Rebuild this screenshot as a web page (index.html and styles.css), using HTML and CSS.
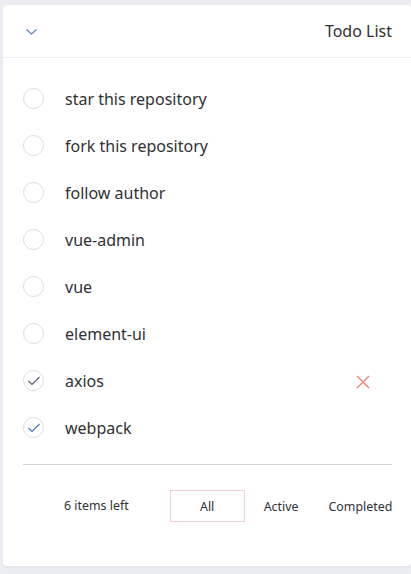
FILE: index.html
```html
<!DOCTYPE html>
<html>
<head>
<meta charset="utf-8">
<link rel="stylesheet" href="styles.css">
</head>
<body>
<div class="card">
  <div class="header">
    <svg class="chevron" width="13" height="8" viewBox="0 0 13 8"><path d="M1.5 1.5 L6.5 6 L11.5 1.5" fill="none" stroke="#5a7fb0" stroke-width="1.1"/></svg>
    <span class="title">Todo List</span>
  </div>
  <ul class="list">
    <li class="item"><span class="toggle"></span><span class="label">star this repository</span></li>
    <li class="item"><span class="toggle"></span><span class="label">fork this repository</span></li>
    <li class="item"><span class="toggle"></span><span class="label">follow author</span></li>
    <li class="item"><span class="toggle"></span><span class="label">vue-admin</span></li>
    <li class="item"><span class="toggle"></span><span class="label">vue</span></li>
    <li class="item"><span class="toggle"></span><span class="label">element-ui</span></li>
    <li class="item">
      <span class="toggle"><svg width="14" height="12" viewBox="0 0 14 12"><path d="M1.5 6 L5 9.5 L12.5 2" fill="none" stroke="#55586a" stroke-width="1.1"/></svg></span>
      <span class="label">axios</span>
      <svg class="destroy" width="14" height="14" viewBox="0 0 14 14"><path d="M1 1 L13 13 M13 1 L1 13" fill="none" stroke="#f07a6e" stroke-width="1.2"/></svg>
    </li>
    <li class="item">
      <span class="toggle"><svg width="14" height="12" viewBox="0 0 14 12"><path d="M1.5 6 L5 9.5 L12.5 2" fill="none" stroke="#3a72c0" stroke-width="1.1"/></svg></span>
      <span class="label">webpack</span>
    </li>
  </ul>
  <div class="divider"></div>
  <div class="footer">
    <span class="count">6 items left</span>
    <span class="filter selected">All</span>
    <span class="filter active">Active</span>
    <span class="filter completed">Completed</span>
  </div>
</div>
</body>
</html>
```
FILE: styles.css
```css
html, body {
  margin: 0;
  padding: 0;
  background: #ebedf2;
  overflow: hidden;
}
body {
  font-family: "Noto Sans", "Open Sans", sans-serif;
  color: #303133;
  padding: 5px 0 0 3px;
  height: 574px;
  box-sizing: border-box;
}
.card {
  background: #fff;
  width: 408px;
  height: 561px;
  border-radius: 4px;
  box-shadow: 0 1px 3px rgba(0,0,0,0.06);
  box-sizing: border-box;
}
.header {
  height: 53px;
  border-bottom: 1px solid #ebeef5;
  display: flex;
  align-items: center;
  justify-content: space-between;
  padding: 0 19px 0 22px;
  box-sizing: border-box;
}
.chevron {
  display: block;
  margin-top: 2px;
}
.title {
  font-size: 16px;
  color: #303133;
  margin-top: -1px;
}
.list {
  list-style: none;
  margin: 0;
  padding: 17px 0 0 0;
}
.item {
  height: 47px;
  display: flex;
  align-items: center;
  padding-left: 20px;
  position: relative;
}
.toggle {
  width: 21px;
  height: 21px;
  border: 1px solid #dcdcdc;
  border-radius: 50%;
  box-sizing: border-box;
  display: flex;
  align-items: center;
  justify-content: center;
  flex: none;
}
.toggle svg {
  display: block;
  margin-top: 1px;
}
.label {
  font-size: 16px;
  margin-left: 21px;
  color: #303133;
  margin-top: 0;
}
.destroy {
  margin-left: auto;
  margin-right: 41px;
  margin-top: 3px;
}
.divider {
  height: 1px;
  background: #d4d4d4;
  margin: 13px 19px 0 20px;
}
.footer {
  display: flex;
  align-items: center;
  padding: 25px 0 0 61px;
  font-size: 12.4px;
  color: #303133;
}
.count {
  margin-top: -2px;
}
.filter {
  display: flex;
  align-items: center;
  justify-content: center;
  box-sizing: border-box;
  height: 32px;
}
.selected {
  margin-left: 41px;
  width: 75px;
  border: 1px solid rgba(210, 120, 120, 0.35);
}
.active {
  margin-left: 19px;
}
.completed {
  margin-left: 30px;
}
```
